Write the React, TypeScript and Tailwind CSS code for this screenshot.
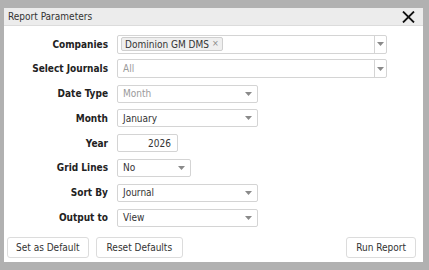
import React from "react";

const font = { fontFamily: '"DejaVu Sans Condensed", "DejaVu Sans", sans-serif' };

function Arrow() {
  return (
    <svg width="7" height="4" viewBox="0 0 7 4" className="shrink-0">
      <path d="M0 0 L7 0 L3.5 4 Z" fill="#8a8a8a" />
    </svg>
  );
}

function Row({ label, children }: { label: string; children: React.ReactNode }) {
  return (
    <div className="flex items-center h-[18px]">
      <div className="w-[104px] text-right font-bold text-[10px] text-[#222]">{label}</div>
      <div className="ml-[9px] flex items-center">{children}</div>
    </div>
  );
}

function Select({ w, value, muted }: { w: string; value: string; muted?: boolean }) {
  return (
    <div className={`${w} h-[18px] border border-[#d4d4d4] rounded-[2px] bg-white flex items-center justify-between pl-[5px] pr-[5px]`}>
      <span className={`text-[10px] ${muted ? "text-[#9a9a9a]" : "text-[#333]"}`}>{value}</span>
      <Arrow />
    </div>
  );
}

function WideSelect({ children }: { children: React.ReactNode }) {
  return (
    <div className="w-[270px] h-[19px] border border-[#d4d4d4] rounded-[2px] bg-white flex items-center">
      <div className="flex-1 flex items-center pl-[3px]">{children}</div>
      <div className="w-[12px] h-full border-l border-[#d4d4d4] flex items-center justify-center">
        <Arrow />
      </div>
    </div>
  );
}

export default function App() {
  return (
    <div className="w-[429px] h-[270px] bg-[#b1b1b1] pt-[8px] pl-[4px]" style={font}>
      <div className="w-[419px] h-[254px] bg-white flex flex-col">
        <div className="h-[18px] bg-[#ececec] border-b border-[#dcdcdc] flex items-center justify-between pl-[4px] pr-[8px]">
          <span className="text-[10px] text-[#333]">Report Parameters</span>
          <svg width="13" height="12" viewBox="0 0 13 12">
            <path d="M1 0.5 L12 11.5 M12 0.5 L1 11.5" stroke="#111" strokeWidth="1.8" />
          </svg>
        </div>
        <div className="flex flex-col gap-[6.8px] pt-[9px]">
          <Row label="Companies">
            <WideSelect>
              <div className="h-[14px] bg-[#efefef] border border-[#cfcfcf] rounded-[2px] flex items-center px-[3px] text-[10px] text-[#333]">
                Dominion GM DMS <span className="ml-[3px] text-[#888] text-[9px]">×</span>
              </div>
            </WideSelect>
          </Row>
          <Row label="Select Journals">
            <WideSelect>
              <span className="pl-[2px] text-[10px] text-[#9a9a9a]">All</span>
            </WideSelect>
          </Row>
          <Row label="Date Type">
            <Select w="w-[141px]" value="Month" muted />
          </Row>
          <Row label="Month">
            <Select w="w-[141px]" value="January" />
          </Row>
          <Row label="Year">
            <div className="w-[61px] h-[18px] border border-[#d4d4d4] rounded-[2px] flex items-center justify-end pr-[6px] text-[10px] text-[#333]">
              2026
            </div>
          </Row>
          <Row label="Grid Lines">
            <Select w="w-[74px]" value="No" />
          </Row>
          <Row label="Sort By">
            <Select w="w-[141px]" value="Journal" />
          </Row>
          <Row label="Output to">
            <Select w="w-[141px]" value="View" />
          </Row>
        </div>
        <div className="mt-auto mb-[4px] flex items-center pl-[3px] pr-[7px]">
          <button className="h-[21px] px-[8px] border border-[#dcdcdc] rounded-[3px] bg-white text-[10px] text-[#333]">Set as Default</button>
          <button className="ml-[7px] h-[21px] px-[10px] border border-[#dcdcdc] rounded-[3px] bg-white text-[10px] text-[#333]">Reset Defaults</button>
          <button className="ml-auto h-[21px] px-[9px] border border-[#dcdcdc] rounded-[3px] bg-white text-[10px] text-[#333]">Run Report</button>
        </div>
      </div>
    </div>
  );
}
